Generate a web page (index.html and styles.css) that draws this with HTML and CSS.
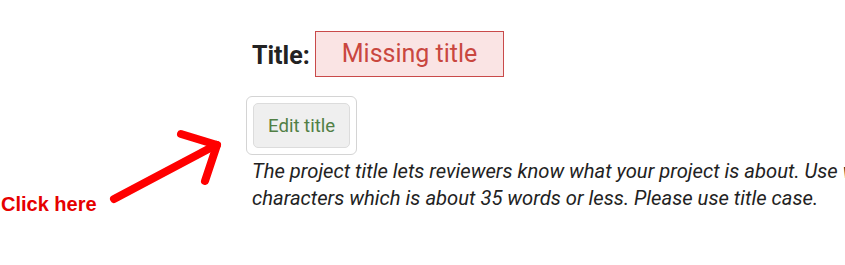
FILE: index.html
```html
<!DOCTYPE html>
<html>
<head>
<meta charset="utf-8">
<link rel="stylesheet" href="styles.css">
</head>
<body>
<div class="page">
  <div class="title-row">
    <span class="title-label">Title:</span>
    <span class="title-missing">Missing title</span>
  </div>
  <div class="btn-wrap">
    <button class="edit-btn">Edit title</button>
  </div>
  <p class="help">The project title lets reviewers know what your project is about. Use words with fewer than 200<br>characters which is about 35 words or less. Please use title case.</p>
</div>
<svg class="arrow" width="240" height="220" viewBox="0 0 240 220">
  <g stroke="#ff0000" stroke-width="8" stroke-linecap="round" fill="none">
    <line x1="114" y1="199" x2="216" y2="145"/>
    <line x1="181" y1="134" x2="217" y2="145"/>
    <line x1="205" y1="181" x2="217" y2="145"/>
  </g>
</svg>
<div class="click-here">Click here</div>
</body>
</html>
```

FILE: styles.css
```css
html, body {
  margin: 0;
  padding: 0;
  background: #ffffff;
  overflow: hidden;
}
body {
  width: 845px;
  height: 265px;
  position: relative;
  font-family: Roboto, "Liberation Sans", sans-serif;
}
.page {
  padding: 31px 0 0 252px;
}
.title-row {
  display: flex;
  align-items: center;
  gap: 5px;
}
.title-label {
  font-weight: 700;
  font-size: 25px;
  color: #222222;
  position: relative;
  top: 1px;
}
.title-missing {
  display: inline-block;
  box-sizing: border-box;
  height: 46px;
  line-height: 44px;
  padding: 0 26px 0 26px;
  font-size: 25px;
  color: #c9473f;
  background: #fae4e4;
  border: 1px solid #c94a4a;
}
.btn-wrap {
  display: inline-block;
  margin: 19px 0 0 -6px;
  padding: 6px;
  border: 1px solid #d4d4d4;
  border-radius: 6px;
}
.edit-btn {
  display: block;
  box-sizing: border-box;
  height: 45px;
  padding: 0 14px;
  font-family: Roboto, "Liberation Sans", sans-serif;
  font-size: 18.6px;
  color: #517f45;
  background: #efefef;
  border: 1px solid #dcdcdc;
  border-radius: 5px;
}
.help {
  margin: 3px 0 0 0;
  font-size: 20.2px;
  font-style: italic;
  line-height: 27px;
  color: #222222;
  white-space: nowrap;
}
.arrow {
  position: absolute;
  left: 0;
  top: 0;
}
.click-here {
  position: absolute;
  left: 1px;
  top: 193px;
  font-family: "Liberation Sans", Arial, sans-serif;
  font-weight: 700;
  font-size: 20px;
  color: #e60000;
}
```
